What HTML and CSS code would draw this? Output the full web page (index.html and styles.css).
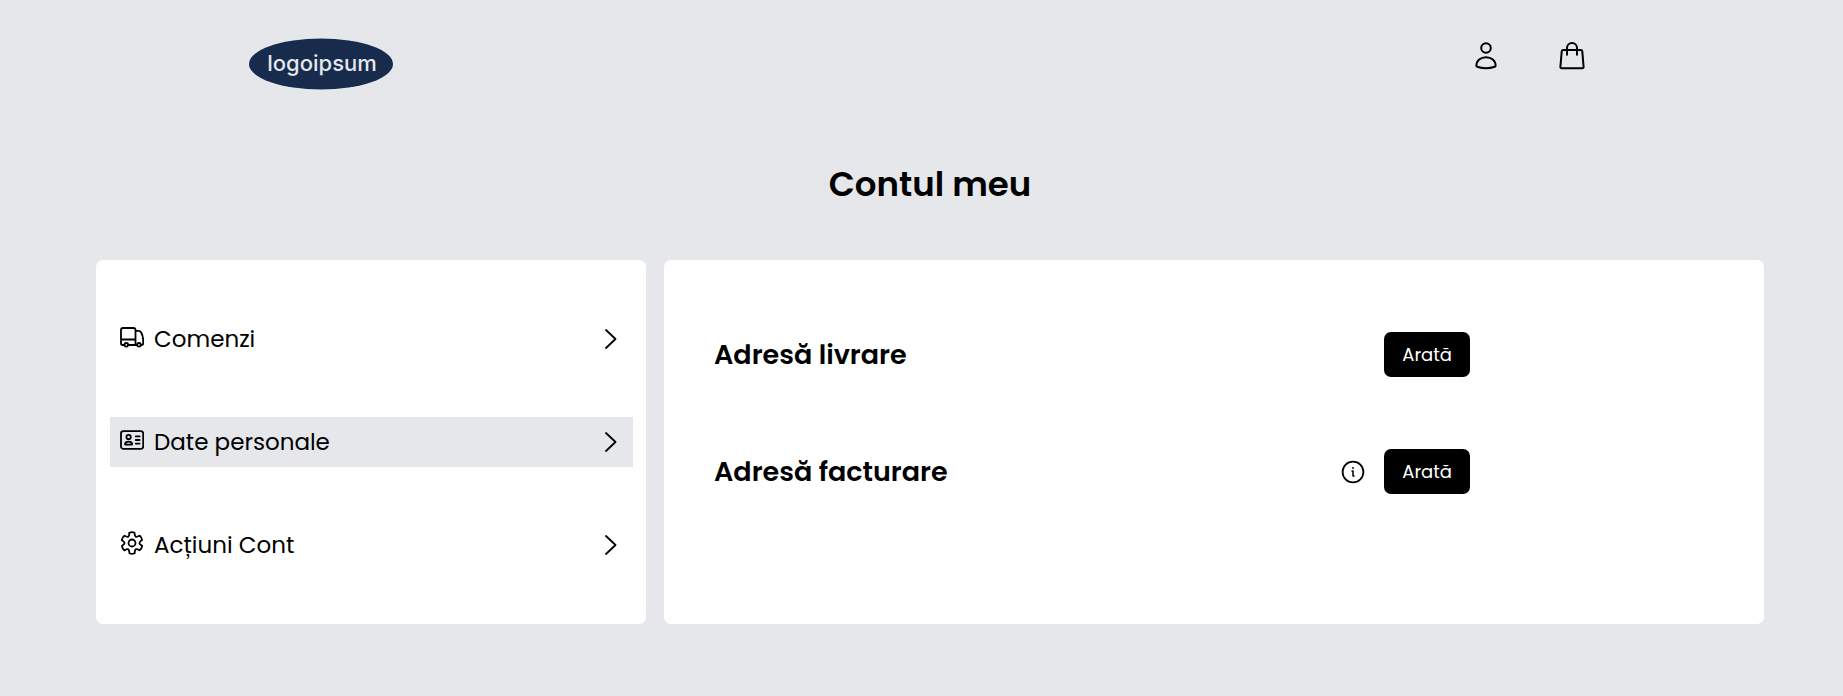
FILE: index.html
```html
<!DOCTYPE html>
<html lang="ro">
<head>
<meta charset="utf-8">
<meta name="viewport" content="width=device-width, initial-scale=1">
<title>Contul meu</title>
<link rel="stylesheet" href="styles.css">
</head>
<body>
<header class="header">
  <a class="logo" href="#" aria-label="logoipsum">
    <svg width="144" height="52" viewBox="0 0 144 52">
      <ellipse cx="72" cy="26" rx="72" ry="25.5" fill="#172b4d"/>
      <text class="logo-text" x="73" y="33" text-anchor="middle">logoipsum</text>
    </svg>
  </a>
  <nav class="header-actions">
    <a class="header-link" href="#" aria-label="Cont">
      <svg class="icon" width="26" height="28" viewBox="0 0 26 28" stroke-width="2">
        <circle cx="13" cy="6" r="4.8"/>
        <path d="M3.400 23.700C3.400 18.700 7.600 15.200 13 15.200s9.600 3.500 9.600 8.500c0 .6-.2.9-.8 1.100-5.600 1.900-12 1.900-17.600 0-.6-.2-.8-.5-.8-1.100z"/>
      </svg>
    </a>
    <a class="header-link" href="#" aria-label="Coș">
      <svg class="icon" width="26" height="28" viewBox="0 0 26 28" stroke-width="2">
        <path d="M4.300 8h17.400c.9 0 1.500.5 1.600 1.400l1.300 15.400c.1.900-.5 1.500-1.400 1.500H2.800c-.9 0-1.500-.6-1.400-1.500L2.700 9.400C2.800 8.500 3.400 8 4.300 8z"/>
        <path d="M8 12.800V6a5 5 0 0 1 10 0v6.800"/>
      </svg>
    </a>
  </nav>
</header>
<main class="page">
  <h1 class="title">Contul meu</h1>
  <div class="columns">
    <nav class="panel menu">
      <a class="menu-item" href="#">
        <svg class="icon menu-icon" width="24" height="24" viewBox="0 0 24 24" stroke-width="1.800">
          <path d="M4 20H2.600C1.500 20 1 19.500 1 18.500V5C1 3.800 1.700 3 3 3h10.500c1.300 0 2 .8 2 2v15H8.500M1 14.500h14.500M15.500 5.800h2.800c1.300 0 2.200.5 2.900 1.700 1.100 2 2 5.300 2 8.300v2.600c0 .9-.5 1.600-1.600 1.600M16.500 20h-1"/>
          <circle cx="6.300" cy="19.800" r="1.800"/><circle cx="19" cy="19.800" r="1.800"/>
        </svg>
        <span class="menu-label">Comenzi</span>
        <svg class="icon" width="12" height="20" viewBox="0 0 12 20" stroke-width="1.800"><path d="M1 1l9.500 9L1 19"/></svg>
      </a>
      <a class="menu-item menu-item-active" href="#" aria-current="page">
        <svg class="icon menu-icon" width="24" height="24" viewBox="0 0 24 24" stroke-width="1.800">
          <rect x="1" y="3.200" width="22.200" height="17.600" rx="2.400"/>
          <circle cx="8.600" cy="9" r="2.200"/>
          <path d="M5 16c.3-1.600 1.700-2.400 3.600-2.400s3.300.8 3.600 2.400c0 .5-.3.700-.9.700H5.900c-.6 0-.9-.2-.9-.7zM15.800 8.400h3.800M15.800 12h3.800M15.800 15.600h3.800"/>
        </svg>
        <span class="menu-label">Date personale</span>
        <svg class="icon" width="12" height="20" viewBox="0 0 12 20" stroke-width="1.800"><path d="M1 1l9.500 9L1 19"/></svg>
      </a>
      <a class="menu-item" href="#">
        <svg class="icon menu-icon" width="24" height="24" viewBox="0 0 24 24" stroke-width="1.800">
          <defs><path id="tooth" d="M9.500 1.800Q12 .6 14.500 1.800C14.900 6.200 15.600 6.600 19.500 4.700"/></defs>
          <use href="#tooth"/>
          <use href="#tooth" transform="rotate(60 12 12)"/>
          <use href="#tooth" transform="rotate(120 12 12)"/>
          <use href="#tooth" transform="rotate(180 12 12)"/>
          <use href="#tooth" transform="rotate(240 12 12)"/>
          <use href="#tooth" transform="rotate(300 12 12)"/>
          <circle cx="12" cy="12" r="3.500"/>
        </svg>
        <span class="menu-label">Acțiuni Cont</span>
        <svg class="icon" width="12" height="20" viewBox="0 0 12 20" stroke-width="1.800"><path d="M1 1l9.500 9L1 19"/></svg>
      </a>
    </nav>
    <section class="panel details">
      <div class="address">
        <h2 class="address-title">Adresă livrare</h2>
        <button class="button" type="button">Arată</button>
      </div>
      <div class="address">
        <h2 class="address-title">Adresă facturare</h2>
        <svg class="icon" width="24" height="24" viewBox="0 0 24 24" stroke-width="1.800" role="img" aria-label="Informații">
          <circle cx="12" cy="12" r="10.400"/>
          <path d="M11 11h1v5h1" stroke-width="1.500"/>
          <circle cx="12" cy="8" r=".4" stroke-width="1.200"/>
        </svg>
        <button class="button" type="button">Arată</button>
      </div>
    </section>
  </div>
</main>
</body>
</html>
```
FILE: styles.css
```css
* {
  box-sizing: border-box;
}

body {
  margin: 0;
  min-height: 100vh;
  background: #e5e7eb;
  color: #000;
  font-family: Poppins, Inter, "Noto Sans", sans-serif;
}

a {
  color: inherit;
  text-decoration: none;
}

.icon {
  display: block;
  flex: none;
  fill: none;
  stroke: currentColor;
  stroke-linecap: round;
  stroke-linejoin: round;
}

.header {
  display: flex;
  align-items: flex-start;
  justify-content: space-between;
  padding: 38px 14% 0 249px;
}

.logo svg {
  display: block;
}

.logo-text {
  fill: #e5e7eb;
  font-family: Inter, sans-serif;
  font-size: 22px;
  font-weight: 500;
}

.header-actions {
  display: flex;
  gap: 60px;
  padding-top: 4px;
}

.page {
  padding: 67px 79px 72px 96px;
}

.title {
  margin: 0 0 49px;
  font-size: 34px;
  font-weight: 600;
  line-height: 54px;
  text-align: center;
}

.columns {
  display: grid;
  grid-template-columns: 1fr 2fr;
  gap: 18px;
}

.panel {
  border-radius: 7px;
  background: #fff;
}

.menu {
  display: flex;
  flex-direction: column;
  gap: 53px;
  padding: 54px 13px 54px 14px;
}

.menu-item {
  display: flex;
  align-items: center;
  gap: 10px;
  height: 50px;
  padding: 0 16px 0 10px;
  font-size: 23px;
  line-height: 34px;
}

.menu-item-active {
  background: #e5e7eb;
}

.menu-icon {
  margin-bottom: 4px;
}

.menu-label {
  flex: 1;
}

.details {
  display: flex;
  flex-direction: column;
  gap: 72px;
  padding: 72px 0 72px 50px;
}

.address {
  display: flex;
  align-items: center;
  gap: 19px;
  width: 72%;
}

.address-title {
  flex: 1;
  margin: 0;
  font-size: 27px;
  font-weight: 600;
  line-height: 40px;
}

.button {
  padding: 9px 18px;
  border: 0;
  border-radius: 7px;
  background: #000;
  color: #fff;
  font-family: inherit;
  font-size: 18px;
  line-height: 27px;
}
```
